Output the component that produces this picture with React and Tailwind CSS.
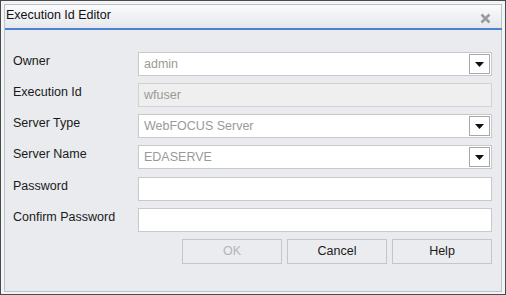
import React from 'react';

const font = { fontFamily: '"Liberation Sans", Arial, sans-serif' };

const Caret = () => (
    <span className="absolute right-[1px] top-[1px] bottom-[1px] w-[21px] flex items-center justify-center bg-white border border-[#a8a8a8]">
        <svg width="9" height="5" viewBox="0 0 9 5">
            <polygon points="0,0 9,0 4.5,5" fill="#111" />
        </svg>
    </span>
);

const Field = ({ label, value, select, disabled }) => (
    <div className="flex items-start h-[24px]">
        <label className="w-[125px] text-[12.5px] text-[#1a1a1a] leading-[14px] pt-[2px]">{label}</label>
        <div
            className={
                'relative w-[354px] h-[24px] border flex items-center pl-[5px] text-[12.5px] text-[#9a9a9a] ' +
                (disabled ? 'bg-[#efefef] border-[#d2d2d2] pl-[1px]' : 'bg-white border-[#c9c9c9]')
            }
        >
            {value}
            {select && <Caret />}
        </div>
    </div>
);

const Button = ({ children, disabled }) => (
    <button
        className={
            'w-[100px] h-[25px] border border-[#c3c6cb] bg-[#eaecef] text-[12.5px] ' +
            (disabled ? 'text-[#b4b4b4]' : 'text-[#1a1a1a]')
        }
    >
        {children}
    </button>
);

export default function App() {
    return (
        <div className="w-[506px] h-[295px] border border-[#4a4a4a] bg-[#f3f4f6] p-[3px] pb-[2px]" style={font}>
            <div className="h-full border border-[#bcc2cb] bg-[#e9ebef] flex flex-col">
                {/* title bar */}
                <div className="h-[23px] flex items-start justify-between pl-[1px] pr-[10px] bg-gradient-to-b from-[#fbfbfc] to-[#e6e8ec]">
                    <span className="text-[12.5px] text-[#111] leading-[14px] pt-[3px]">Execution Id Editor</span>
                    <svg width="11" height="11" viewBox="0 0 11 11" className="mt-[8px]">
                        <path d="M1.5 1.5 L9.5 9.5 M9.5 1.5 L1.5 9.5" stroke="#9a9ca0" strokeWidth="2.6" />
                    </svg>
                </div>
                <div className="h-[2px] bg-[#4d7fd2] mr-[-1px]" />

                <div className="flex flex-col gap-[7px] pt-[22px] pl-[8px]">
                    <Field label="Owner" value="admin" select />
                    <Field label="Execution Id" value="wfuser" disabled />
                    <Field label="Server Type" value="WebFOCUS Server" select />
                    <Field label="Server Name" value="EDASERVE" select />
                    <div className="mt-[1px]">
                        <Field label="Password" />
                    </div>
                    <Field label="Confirm Password" />
                    <div className="flex justify-end gap-[5px] w-[479px]">
                        <Button disabled>OK</Button>
                        <Button>Cancel</Button>
                        <Button>Help</Button>
                    </div>
                </div>
            </div>
        </div>
    );
}
